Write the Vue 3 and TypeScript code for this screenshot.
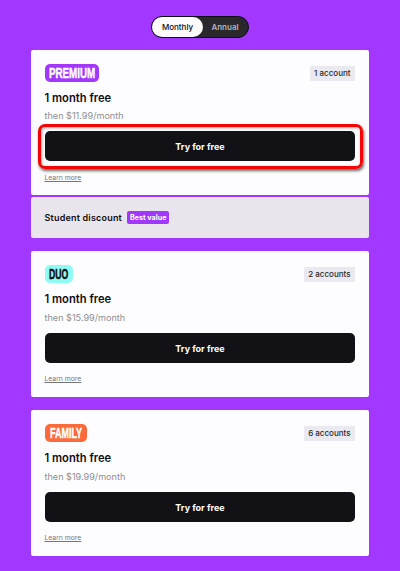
<script setup lang="ts">
interface Plan {
  name: string
  tone: string
  accounts: string
  price: string
  highlighted?: boolean
}

const plans: Plan[] = [
  { name: 'PREMIUM', tone: 'premium', accounts: '1 account', price: '$11.99', highlighted: true },
  { name: 'DUO', tone: 'duo', accounts: '2 accounts', price: '$15.99' },
  { name: 'FAMILY', tone: 'family', accounts: '6 accounts', price: '$19.99' },
]
</script>

<template>
  <main class="page">
    <div class="toggle">
      <span class="opt active">Monthly</span>
      <span class="opt">Annual</span>
    </div>

    <template v-for="plan in plans" :key="plan.name">
      <section class="card" :class="{ first: plan.highlighted }">
        <header class="head">
          <span class="badge" :class="plan.tone"><span class="badge-text">{{ plan.name }}</span></span>
          <span class="accounts">{{ plan.accounts }}</span>
        </header>
        <h2 class="title">1 month free</h2>
        <p class="price">then {{ plan.price }}/month</p>
        <div class="cta" :class="{ ring: plan.highlighted }">
          <button class="btn">Try for free</button>
        </div>
        <a class="learn">Learn more</a>
      </section>
      <section v-if="plan.highlighted" class="student">
        <span class="student-label">Student discount</span>
        <span class="best">Best value</span>
      </section>
    </template>
  </main>
</template>

<style>
html, body { margin: 0; background: #a238ff; }
</style>

<style scoped>
.page {
  box-sizing: border-box;
  width: 400px;
  height: 571px;
  padding: 16px 31px 0;
  background: #a238ff;
  display: flex;
  flex-direction: column;
  font-family: Inter, "Liberation Sans", sans-serif;
  color: #0f0d13;
  overflow: hidden;
}
.toggle {
  align-self: center;
  box-sizing: border-box;
  width: 98px;
  height: 22px;
  border-radius: 11px;
  background: #29282d;
  border: 1px solid #0f0d13;
  display: flex;
  align-items: center;
  margin-bottom: 12px;
  font-size: 8px;
}
.opt {
  flex: 1;
  text-align: center;
  color: #b5b3ba;
  font-weight: 600;
  padding-right: 1px;
}
.opt.active {
  flex: 0 0 51px;
  height: 20px;
  line-height: 20px;
  padding-right: 0;
  border-radius: 10px;
  background: #fbfbfb;
  color: #0f0d13;
  font-weight: 500;
}
.card {
  box-sizing: border-box;
  height: 146px;
  margin-bottom: 13px;
  padding: 14px 14px 0;
  background: #fdfdff;
  border-radius: 2px;
  display: flex;
  flex-direction: column;
}
.card.first { height: 145px; margin-bottom: 2px; }
.card.first .title { margin-top: 8.5px; }
.card.first .price { margin-top: 4.5px; }
.card.first .learn { margin-top: 12px; }
.head {
  display: flex;
  justify-content: space-between;
  align-items: center;
  height: 18px;
}
.badge {
  height: 18px;
  border-radius: 5px;
  display: flex;
  align-items: center;
  justify-content: center;
  color: #fff;
  font-family: "Liberation Sans", sans-serif;
  font-size: 14px;
  font-weight: 700;
  white-space: nowrap;
}
.badge-text {
  display: block;
  flex: none;
  -webkit-text-stroke: 0.45px currentColor;
}
.badge.premium { width: 54px; background: #a238ff; }
.badge.premium .badge-text { transform: scaleX(0.7); }
.badge.duo { width: 28px; background: #8efcf3; color: #0f0d13; }
.badge.duo .badge-text { transform: scaleX(0.62); }
.badge.family { width: 42px; background: #ff6a3d; }
.badge.family .badge-text { transform: scaleX(0.64); }
.accounts {
  height: 15px;
  line-height: 15px;
  padding: 0 4.5px;
  background: #ebe9f0;
  border-radius: 1px;
  font-size: 8px;
  font-weight: 500;
  color: #29282d;
}
.title {
  margin: 9px 0 0 -0.5px;
  height: 14px;
  line-height: 14px;
  font-size: 11.2px;
  font-weight: 600;
}
.price {
  margin: 5px 0 0 -0.5px;
  height: 13px;
  line-height: 13px;
  font-size: 9.1px;
  font-weight: 400;
  color: #8f8d94;
}
.cta { margin-top: 9px; position: relative; }
.btn {
  display: block;
  width: 100%;
  height: 30px;
  border: 0;
  border-radius: 5px;
  background: #121216;
  color: #fff;
  font-family: inherit;
  font-size: 9px;
  font-weight: 700;
  padding: 0;
}
.cta.ring::after {
  content: "";
  position: absolute;
  inset: -7px -8px -8px -7px;
  border: 3px solid #f30505;
  border-radius: 7px;
  box-shadow: 1px 2px 3px rgba(0, 0, 0, 0.6), inset 1px 1px 3px rgba(0, 0, 0, 0.35);
  pointer-events: none;
}
.learn {
  margin: 11px 0 0 -0.5px;
  font-size: 6.8px;
  line-height: 10px;
  color: #77757c;
  text-decoration: underline;
}
.student {
  box-sizing: border-box;
  height: 41px;
  margin-bottom: 13px;
  padding: 0 13.5px;
  background: #e8e5ec;
  border-radius: 2px;
  display: flex;
  align-items: center;
  gap: 5px;
}
.student-label {
  font-size: 9px;
  font-weight: 600;
  letter-spacing: 0.2px;
}
.best {
  height: 13px;
  line-height: 13px;
  padding: 0 3px;
  border-radius: 2px;
  background: #a238ff;
  color: #fff;
  font-size: 7.2px;
  font-weight: 700;
}
</style>
